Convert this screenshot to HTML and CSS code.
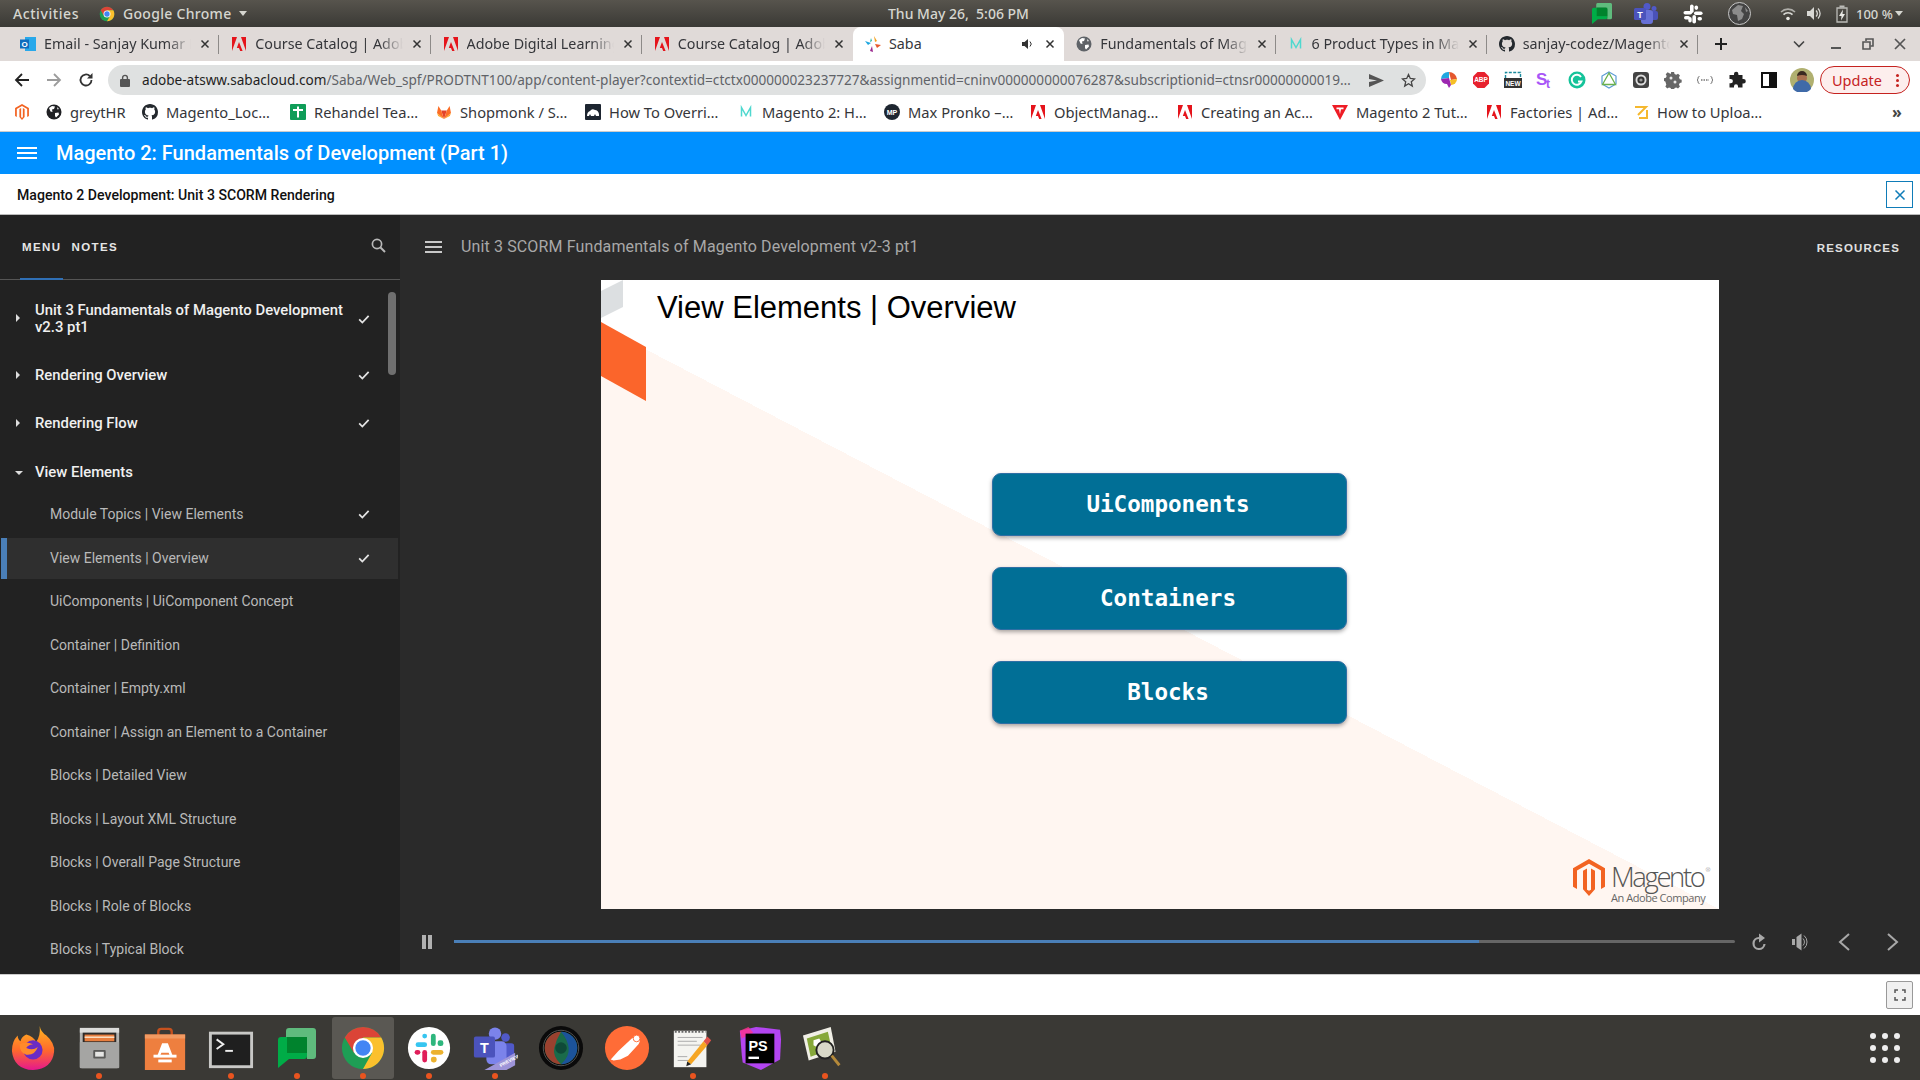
FILE: index.html
```html
<!DOCTYPE html>
<html>
<head>
	<title>Saba</title>
	<meta charset="utf-8">
	<link rel="stylesheet" href="styles.css">
</head>
<body>
	<svg class="defs" width="0" height="0">
		<symbol id="adobe" viewBox="0 0 16 16"><path fill="#e5141b" d="M1 1h5L1 15zM15 1h-5l5 14zM8 6l3.6 9H9.2L8 12H5.8z"/></symbol>
		<symbol id="github" viewBox="0 0 16 16"><path fill="#24292e" d="M8 0C3.58 0 0 3.58 0 8c0 3.54 2.29 6.53 5.47 7.59.4.07.55-.17.55-.38 0-.19-.01-.82-.01-1.49-2.01.37-2.53-.49-2.69-.94-.09-.23-.48-.94-.82-1.13-.28-.15-.68-.52-.01-.53.63-.01 1.08.58 1.23.82.72 1.21 1.87.87 2.33.66.07-.52.28-.87.51-1.07-1.78-.2-3.64-.89-3.64-3.95 0-.87.31-1.59.82-2.15-.08-.2-.36-1.02.08-2.12 0 0 .67-.21 2.2.82.64-.18 1.32-.27 2-.27.68 0 1.36.09 2 .27 1.53-1.04 2.2-.82 2.2-.82.44 1.1.16 1.92.08 2.12.51.56.82 1.27.82 2.15 0 3.07-1.87 3.75-3.65 3.95.29.25.54.73.54 1.48 0 1.07-.01 1.93-.01 2.2 0 .21.15.46.55.38A8.013 8.013 0 0016 8c0-4.42-3.58-8-8-8z"/></symbol>
		<symbol id="globe" viewBox="0 0 16 16"><circle cx="8" cy="8" r="7.5" fill="currentColor"/><path fill="#fff" d="M3 4l3-2 3 .5L8 5 6 5.5 6.5 8l-2-.5zM9 9l3.5-.5.5 2-3 3-1-1.5zM11 3l2 2-1.5.5z"/></symbol>
		<symbol id="mteal" viewBox="0 0 16 16"><path fill="none" stroke="#4fd8cf" stroke-width="1.5" d="M3.500 12.500V3.500l4.500 8 4.500-8v9"/></symbol>
		<symbol id="check" viewBox="0 0 16 16"><path fill="none" stroke="#e4e4e4" stroke-width="2" d="M2.5 8.5l3.6 3.6 7.2-7.6"/></symbol>
		<symbol id="tclose" viewBox="0 0 12 12"><path fill="none" stroke="#333" stroke-width="1.5" d="M2.5 2.5l7 7M9.5 2.5l-7 7"/></symbol>
		<symbol id="chatg" viewBox="0 0 38 40"><path fill="#5fbb7d" d="M11 0h24a3 3 0 0 1 3 3v25a3 3 0 0 1-3 3h-6V12a3 3 0 0 0-3-3H8V3a3 3 0 0 1 3-3z"/><path fill="#00ac47" d="M3 9h23a3 3 0 0 1 3 3v16a3 3 0 0 1-3 3H11l-11 9V12a3 3 0 0 1 3-3z"/><rect x="9" y="9" width="20" height="16" fill="#00832d"/></symbol>
	</svg>

	<div class="topbar">
		<span class="top-activities">Activities</span>
		<svg class="top-chrome" width="16" height="16" viewBox="0 0 48 48"><circle cx="24" cy="24" r="22" fill="#1e9e55"/><path fill="#db4437" d="M24 2A22 22 0 0 1 43.05 13H24L14.5 29 4.95 13A22 22 0 0 1 24 2z"/><path fill="#fbc02d" d="M43.05 13A22 22 0 0 1 24 46L33.5 29 24 13z"/><circle cx="24" cy="24" r="10.5" fill="#fff"/><circle cx="24" cy="24" r="8" fill="#4285f4"/></svg>
		<span class="top-app">Google Chrome</span>
		<span class="caret"></span>
		<span class="top-clock">Thu May 26,&nbsp; 5:06 PM</span>
		<div class="tray">
			<svg class="t-chat" width="20" height="23" viewBox="0 0 38 40"><use href="#chatg"/></svg>
			<svg class="t-teams" width="24" height="22" viewBox="0 0 24 22"><circle cx="13" cy="3.5" r="3.5" fill="#5059c9"/><circle cx="20" cy="5.5" r="2.5" fill="#5059c9"/><rect x="15" y="8" width="9" height="9" rx="2" fill="#4a52b8"/><rect x="7" y="7" width="12" height="14" rx="3" fill="#6770d6"/><rect x="0" y="5" width="12" height="12" rx="1.5" fill="#4b53bc"/><text x="6" y="14.5" class="t-teams-t">T</text></svg>
			<svg class="t-slack" width="20" height="20" viewBox="0 0 20 20"><g fill="#fff"><rect x="7" y="0.5" width="3.6" height="8.6" rx="1.8"/><rect x="0.5" y="7" width="8.6" height="3.6" rx="1.8"/><rect x="11" y="7.4" width="8.6" height="3.6" rx="1.8"/><rect x="9.4" y="11" width="3.6" height="8.6" rx="1.8"/><rect x="11.5" y="1.5" width="3.6" height="4.4" rx="1.8"/><rect x="1" y="12" width="6" height="3.4" rx="1.7"/><rect x="14.5" y="13" width="4.5" height="3.4" rx="1.7"/><rect x="5.3" y="13" width="3.4" height="5.5" rx="1.7"/></g></svg>
			<svg class="t-globe" width="23" height="23" viewBox="0 0 23 23"><circle cx="11.5" cy="11.5" r="11" fill="#444" stroke="#c8c8c8"/><path fill="#8c8c8c" d="M4 8l6-5 5 1-2 5 3 3-2 5-4 2-1-6-4-1zM17 5l3 4-2 1z"/></svg>
			<svg class="t-wifi" width="16" height="14" viewBox="0 0 16 14"><g fill="none" stroke="#d8d8d4" stroke-width="1.6"><path d="M1 5a10 10 0 0 1 14 0" opacity=".7"/><path d="M3.5 7.6a6.4 6.4 0 0 1 9 0"/></g><circle cx="8" cy="11.5" r="1.8" fill="#e8e8e4"/></svg>
			<svg class="t-sound" width="16" height="15" viewBox="0 0 16 15"><path fill="#d8d8d4" d="M0 5h3l4-4v13l-4-4H0z"/><g fill="none" stroke="#d8d8d4" stroke-width="1.3"><path d="M9 4.5a4 4 0 0 1 0 6"/><path d="M11 2.5a7 7 0 0 1 0 10"/></g></svg>
			<svg class="t-batt" width="12" height="18" viewBox="0 0 12 18"><path fill="none" stroke="#bcbcb8" stroke-width="1.3" d="M1 3h10v14H1z"/><rect x="3.5" y="0.5" width="5" height="2" fill="#bcbcb8"/><path fill="#e8e8e4" d="M7 4.5L3 11h2.5L5 15.5 9 9H6.5z"/></svg>
			<span class="t-pct">100 %</span>
			<span class="caret"></span>
		</div>
	</div>

	<div class="tabstrip">
		<div class="tab">
			<svg class="fav" viewBox="0 0 16 16"><rect x="5" y="1" width="11" height="14" fill="#28a8ea"/><rect x="0" y="3.5" width="9" height="9" fill="#0f6cbd"/><text x="4.5" y="10.8" class="fav-o">O</text></svg>
			<span class="tab-title">Email - Sanjay Kumar D</span>
			<svg class="tab-x"><use href="#tclose"/></svg>
		</div>
		<div class="tab">
			<svg class="fav"><use href="#adobe"/></svg>
			<span class="tab-title">Course Catalog | Adobe</span>
			<svg class="tab-x"><use href="#tclose"/></svg>
		</div>
		<div class="tab">
			<svg class="fav"><use href="#adobe"/></svg>
			<span class="tab-title">Adobe Digital Learning</span>
			<svg class="tab-x"><use href="#tclose"/></svg>
		</div>
		<div class="tab no-sep">
			<svg class="fav"><use href="#adobe"/></svg>
			<span class="tab-title">Course Catalog | Adobe</span>
			<svg class="tab-x"><use href="#tclose"/></svg>
		</div>
		<div class="tab active">
			<svg class="fav" viewBox="0 0 16 16"><path fill="#f4a11d" d="M9 0l1 6 2-1z"/><path fill="#e8582c" d="M10 8l6 1-4 3z"/><path fill="#9c2b8f" d="M7 10l1 6-3-1z"/><path fill="#1fa7e0" d="M0 5l6 2-3 2z"/><path fill="#1fb5a8" d="M5 6l2-1-1-3z"/></svg>
			<span class="tab-title">Saba</span>
			<svg class="tab-audio" width="12" height="12" viewBox="0 0 12 12"><path fill="#333" d="M0 4h2.5L6 1v10L2.5 8H0z"/><path fill="none" stroke="#333" d="M8 3.5a3.5 3.5 0 0 1 0 5"/></svg>
			<svg class="tab-x"><use href="#tclose"/></svg>
		</div>
		<div class="tab">
			<svg class="fav globe-ic"><use href="#globe"/></svg>
			<span class="tab-title">Fundamentals of Magento</span>
			<svg class="tab-x"><use href="#tclose"/></svg>
		</div>
		<div class="tab">
			<svg class="fav"><use href="#mteal"/></svg>
			<span class="tab-title">6 Product Types in Magento</span>
			<svg class="tab-x"><use href="#tclose"/></svg>
		</div>
		<div class="tab">
			<svg class="fav"><use href="#github"/></svg>
			<span class="tab-title">sanjay-codez/Magento</span>
			<svg class="tab-x"><use href="#tclose"/></svg>
		</div>
		<svg class="tab-new" width="14" height="14" viewBox="0 0 14 14"><path stroke="#222" stroke-width="2" d="M7 1v12M1 7h12"/></svg>
		<svg class="tab-down" width="12" height="8" viewBox="0 0 12 8"><path fill="none" stroke="#444" stroke-width="1.6" d="M1 1.5l5 5 5-5"/></svg>
		<div class="win-btns">
			<svg width="12" height="12" viewBox="0 0 12 12"><path stroke="#555" stroke-width="2" d="M1 10h10"/></svg>
			<svg width="12" height="12" viewBox="0 0 12 12"><g fill="none" stroke="#555" stroke-width="1.6"><path d="M4 3V1h7v7H8.5"/><path d="M1 4h7v7H1z"/></g></svg>
			<svg width="12" height="12" viewBox="0 0 12 12"><path stroke="#555" stroke-width="1.7" d="M1 1l10 10M11 1L1 11"/></svg>
		</div>
	</div>

	<div class="toolbar">
		<svg class="nav-ic" viewBox="0 0 16 16"><path fill="none" stroke="#222" stroke-width="1.8" d="M15 8H2M8 2L2 8l6 6"/></svg>
		<svg class="nav-ic" viewBox="0 0 16 16"><path fill="none" stroke="#9c9c9c" stroke-width="1.8" d="M1 8h13M8 2l6 6-6 6"/></svg>
		<svg class="nav-ic" viewBox="0 0 16 16"><path fill="none" stroke="#333" stroke-width="1.8" d="M13.5 8A5.5 5.5 0 1 1 11.8 4"/><path fill="#333" d="M14.5 1v5.5H9z"/></svg>
		<div class="omnibox">
			<svg class="lock" width="10" height="13" viewBox="0 0 10 13"><path fill="none" stroke="#555" stroke-width="1.4" d="M2.6 6V3.8a2.4 2.4 0 0 1 4.8 0V6"/><rect y="5" width="10" height="8" rx="1" fill="#555"/></svg>
			<span class="url"><b>adobe-atsww.sabacloud.com</b>/Saba/Web_spf/PRODTNT100/app/content-player?contextid=ctctx000000023237727&amp;assignmentid=cninv000000000076287&amp;subscriptionid=ctnsr00000000019…</span>
			<svg class="omni-ic" width="15" height="13" viewBox="0 0 15 13"><path fill="#555" d="M0 0l15 6.5L0 13V8l8-1.5L0 5z"/></svg>
			<svg class="omni-ic star" width="15" height="15" viewBox="0 0 15 15"><path fill="none" stroke="#444" stroke-width="1.3" d="M7.5 1.5l1.8 4 4.3.4-3.3 2.9 1 4.3-3.8-2.3-3.8 2.3 1-4.3L1.4 5.9l4.3-.4z"/></svg>
		</div>
		<div class="exts">
			<svg viewBox="0 0 18 18"><path fill="#e4572e" d="M9 1a8 8 0 0 1 8 7l-6 1z"/><path fill="#f6bf26" d="M10 9l7-1a6 6 0 0 1-6 6z"/><path fill="#1fa7e0" d="M1 8a7 7 0 0 1 8-7v6z"/><path fill="#9c27b0" d="M1 8l8-1 2 7-2 3-2-4a6 6 0 0 1-6-5z"/></svg>
			<svg viewBox="0 0 18 18"><path fill="#e7222e" d="M5.5 1h7L17 5.5v7L12.5 17h-7L1 12.5v-7z"/><text x="9" y="11.4" class="ext-abp">ABP</text></svg>
			<svg viewBox="0 0 18 18"><path fill="none" stroke="#1b8a9c" stroke-width="1.4" stroke-dasharray="3 1.4" d="M1.5 7V1.5h15V7"/><rect y="7" width="18" height="10" fill="#333"/><text x="9" y="15" class="ext-new">NEW</text></svg>
			<svg viewBox="0 0 18 18"><text x="0" y="14" class="ext-st">S</text><text x="10" y="17" class="ext-st small">t</text></svg>
			<svg viewBox="0 0 18 18"><circle cx="9" cy="9" r="8.5" fill="#15c39a"/><path fill="none" stroke="#fff" stroke-width="1.9" d="M13 6a5 5 0 1 0 .5 4.5H10"/></svg>
			<svg viewBox="0 0 18 18"><path fill="none" stroke="#5b9bd5" stroke-width="1.2" d="M9 1l7 4v8l-7 4-7-4V5z"/><path fill="none" stroke="#6ab04c" stroke-width="1.3" d="M9 2L2.5 13.5h13z"/></svg>
			<svg viewBox="0 0 18 18"><rect x="1" y="1" width="16" height="16" rx="3" fill="#444"/><circle cx="9" cy="9" r="5.5" fill="#ddd"/><circle cx="9" cy="9" r="3.6" fill="#333"/><circle cx="9" cy="9" r="1.6" fill="#999"/></svg>
			<svg viewBox="0 0 18 18"><path fill="#666" d="M7.500 1h3l.5 2 1.800.8 1.800-1 2 2-1 1.800.8 1.900 2 .5v3l-2 .5-.8 1.800 1 1.800-2 2-1.800-1-1.800.7-.5 2h-3l-.5-2-1.800-.7-1.800 1-2-2 1-1.800L1.400 11 0 10.500v-3l2-.5.8-1.900-1-1.800 2-2 1.800 1L7 3z" transform="scale(.96)"/><circle cx="7" cy="7" r="1.5" fill="#e8e8e8"/><circle cx="11" cy="11" r="1.500" fill="#e8e8e8"/></svg>
			<svg viewBox="0 0 18 18"><path fill="none" stroke="#777" stroke-width="1" d="M3.500 5.500Q2 5.500 2 7v1.200L1 9l1 .8V11q0 1.500 1.500 1.500M14.500 5.500Q16 5.500 16 7v1.200l1 .8-1 .8V11q0 1.500-1.500 1.500"/><path stroke="#777" stroke-width="1.500" stroke-dasharray="1.500 1" d="M5 9h8"/></svg>
			<svg viewBox="0 0 18 18"><path fill="#222" d="M6 3a2.200 2.200 0 0 1 4.400 0V4h4.100v4h1a2.300 2.300 0 0 1 0 4.600h-1V16.500H10v-1.300a2 2 0 0 0-4 0v1.300H1.500v-4.200h1.200a2.200 2.200 0 0 0 0-4.400H1.500V4H6z"/></svg>
			<svg viewBox="0 0 18 18"><rect x="2" y="2" width="14" height="14" fill="none" stroke="#111" stroke-width="2"/><rect x="9" y="2" width="7" height="14" fill="#111"/></svg>
			<svg class="avatar" viewBox="0 0 24 24"><circle cx="12" cy="12" r="12" fill="#b0b070"/><circle cx="12" cy="10" r="5" fill="#a8714f"/><path fill="#3a2a20" d="M7 8a5 5 0 0 1 10 0q-5-2-10 0z"/><path fill="#3f6aa8" d="M3 21a9 9 0 0 1 18 0 12 12 0 0 1-18 0z"/></svg>
		</div>
		<div class="update">
			<span>Update</span>
			<span class="update-dots"></span>
		</div>
	</div>

	<div class="bookmarks">
		<span class="bm"><svg width="16" height="18" viewBox="0 0 32 37"><path fill="#f26322" d="M16 0l16 9.200V27.800l-4 2.300V11.600L16 4.700 4 11.600V30.100l-4-2.300V9.200z"/><path fill="#f26322" d="M18 9.400l4 2.300v18.600L16 37l-6-6.700V11.700l4-2.300v21.300l2 1.100 2-1.100z"/></svg></span>
		<span class="bm"><svg class="globe-dk"><use href="#globe"/></svg>greytHR</span>
		<span class="bm"><svg><use href="#github"/></svg>Magento_Loc…</span>
		<span class="bm"><svg viewBox="0 0 16 16"><rect width="16" height="16" rx="1" fill="#0f9d58"/><path stroke="#fff" stroke-width="2" d="M8 2.500v11M3 6h10"/></svg>Rehandel Tea…</span>
		<span class="bm"><svg viewBox="0 0 16 16"><path fill="#e24329" d="M8 15L5.200 6.500h5.600z"/><path fill="#fc6d26" d="M8 15L1 9l1.400-7 2.800 4.500zM8 15l7-6-1.400-7-2.800 4.500z"/><path fill="#fca326" d="M1 9l7 6-5.800-3zM15 9l-7 6 5.800-3z"/></svg>Shopmonk / S…</span>
		<span class="bm"><svg viewBox="0 0 16 16"><rect width="16" height="16" rx="1" fill="#1d2530"/><path fill="#fff" d="M2 12q0-4 3-5 2-3 5-1 3 0 4 4v2h-3l-1-2-1 2H6l-1-2-1 2z"/></svg>How To Overri…</span>
		<span class="bm"><svg><use href="#mteal"/></svg>Magento 2: H…</span>
		<span class="bm"><svg viewBox="0 0 16 16"><circle cx="8" cy="8" r="8" fill="#1e2630"/><text x="8" y="11" class="bm-mp">MP</text></svg>Max Pronko –…</span>
		<span class="bm"><svg><use href="#adobe"/></svg>ObjectManag…</span>
		<span class="bm"><svg><use href="#adobe"/></svg>Creating an Ac…</span>
		<span class="bm"><svg viewBox="0 0 16 16"><path fill="#ee1c25" d="M0 1h16l-8 15z"/><path fill="#fff" d="M4.500 3.500h7v1.800H9l-1 5-1-5H4.500z"/></svg>Magento 2 Tut…</span>
		<span class="bm"><svg><use href="#adobe"/></svg>Factories | Ad…</span>
		<span class="bm"><svg viewBox="0 0 16 16"><path fill="none" stroke="#f5b82e" stroke-width="2" d="M2 3h11l-8 8M14 6v8H6"/></svg>How to Uploa…</span>
		<span class="bm-more">»</span>
	</div>

	<div class="course-bar">
		<span class="burger"><i></i><i></i><i></i></span>
		<span class="course-title">Magento 2: Fundamentals of Development (Part 1)</span>
	</div>
	<div class="sub-bar">
		<span class="sub-title">Magento 2 Development: Unit 3 SCORM Rendering</span>
		<span class="sub-close"><svg width="12" height="12" viewBox="0 0 12 12"><path stroke="#0f7cb8" stroke-width="1.500" d="M1.500 1.500l9 9M10.500 1.500l-9 9"/></svg></span>
	</div>

	<div class="player">
		<div class="side">
			<div class="side-head">
				<span class="side-tab on">MENU</span>
				<span class="side-tab">NOTES</span>
				<svg class="side-search" width="15" height="15" viewBox="0 0 15 15"><circle cx="6" cy="6" r="4.600" fill="none" stroke="#b8b8b8" stroke-width="1.700"/><path stroke="#b8b8b8" stroke-width="2" d="M9.500 9.500l4.500 4.500"/></svg>
			</div>
			<div class="scroll-thumb"></div>
			<ul class="toc">
				<li class="sec first"><i class="arrow"></i><span>Unit 3 Fundamentals of Magento Development v2.3 pt1</span><svg class="tick"><use href="#check"/></svg></li>
				<li class="sec"><i class="arrow"></i><span>Rendering Overview</span><svg class="tick"><use href="#check"/></svg></li>
				<li class="sec"><i class="arrow"></i><span>Rendering Flow</span><svg class="tick"><use href="#check"/></svg></li>
				<li class="sec open"><i class="arrow"></i><span>View Elements</span></li>
				<li class="topic"><span>Module Topics | View Elements</span><svg class="tick"><use href="#check"/></svg></li>
				<li class="topic active"><span>View Elements | Overview</span><svg class="tick"><use href="#check"/></svg></li>
				<li class="topic"><span>UiComponents | UiComponent Concept</span></li>
				<li class="topic"><span>Container | Definition</span></li>
				<li class="topic"><span>Container | Empty.xml</span></li>
				<li class="topic"><span>Container | Assign an Element to a Container</span></li>
				<li class="topic"><span>Blocks | Detailed View</span></li>
				<li class="topic"><span>Blocks | Layout XML Structure</span></li>
				<li class="topic"><span>Blocks | Overall Page Structure</span></li>
				<li class="topic"><span>Blocks | Role of Blocks</span></li>
				<li class="topic"><span>Blocks | Typical Block</span></li>
			</ul>
		</div>

		<div class="stage">
			<div class="stage-head">
				<span class="burger small"><i></i><i></i><i></i></span>
				<span class="stage-title">Unit 3 SCORM Fundamentals of Magento Development v2-3 pt1</span>
				<span class="stage-res">RESOURCES</span>
			</div>
			<div class="slide">
				<svg class="slide-shapes" width="46" height="122" viewBox="0 0 46 122"><path fill="#dcdfe1" d="M0 11L22 0v27L0 38z"/><path fill="#fb652b" d="M0 42l45 25v54L0 96z"/></svg>
				<h1 class="slide-title">View Elements | Overview</h1>
				<div class="slide-btns">
					<div class="slide-btn">UiComponents</div>
					<div class="slide-btn">Containers</div>
					<div class="slide-btn">Blocks</div>
				</div>
				<div class="slide-logo">
					<svg width="32" height="37" viewBox="0 0 32 37"><path fill="#f26322" d="M16 0l16 9.200V27.800l-4 2.300V11.600L16 4.700 4 11.600V30.100l-4-2.300V9.200z"/><path fill="#f26322" d="M18 9.400l4 2.300v18.600L16 37l-6-6.700V11.700l4-2.300v21.300l2 1.100 2-1.100z"/></svg>
					<div class="logo-text">
						<span class="logo-name">Magento<sup>®</sup></span>
						<span class="logo-sub">An Adobe Company</span>
					</div>
				</div>
			</div>
			<div class="controls">
				<span class="pause"><i></i><i></i></span>
				<div class="progress"><div class="progress-fill"></div></div>
				<svg class="ctl c-reload" viewBox="0 0 24 24"><path fill="none" stroke="#a8a8a8" stroke-width="2.200" d="M17.500 14a5.500 5.500 0 1 1-5.500-6"/><path fill="#a8a8a8" d="M12 3.500l6 4.500-6 4.500z"/></svg>
				<svg class="ctl c-sound" viewBox="0 0 24 24"><path fill="#a8a8a8" d="M4 9h3v6H4zM8.500 7l5-3.500v17l-5-3.500z"/><g fill="none" stroke="#a8a8a8"><path d="M15 8.500a5 5 0 0 1 0 7"/><path d="M16 5.500a8.500 8.500 0 0 1 0 13"/></g></svg>
				<svg class="ctl c-prev" viewBox="0 0 24 24"><path fill="none" stroke="#a8a8a8" stroke-width="2" d="M16 4l-9 8 9 8"/></svg>
				<svg class="ctl c-next" viewBox="0 0 24 24"><path fill="none" stroke="#a8a8a8" stroke-width="2" d="M8 4l9 8-9 8"/></svg>
			</div>
		</div>
	</div>

	<div class="foot-bar">
		<span class="full-btn"><svg width="12" height="12" viewBox="0 0 12 12"><path fill="none" stroke="#555" stroke-width="1.500" d="M1 4V1h3M8 1h3v3M11 8v3H8M4 11H1V8"/></svg></span>
	</div>

	<div class="dock">
		<div class="dock-app">
			<svg viewBox="0 0 48 48"><defs><linearGradient id="ff" x1="0" y1="0" x2="0" y2="1"><stop offset="0" stop-color="#ffb81f"/><stop offset=".55" stop-color="#ff6a2b"/><stop offset="1" stop-color="#e5178e"/></linearGradient></defs><path fill="url(#ff)" d="M31 1q1 6 7 10 9 8 8 17-2 18-22 19Q4 46 2 27 2 17 8 11q0 4 3 6 1-5 6-7 8 2 10 8 5-6 4-17z"/><circle cx="24" cy="26" r="10" fill="#6a2bc4"/><path fill="#ff8a2b" d="M10 20q6-3 14 0-6 1-7 4 7 3 12-1-3 9-12 8-7-2-7-11z"/></svg>
		</div>
		<div class="dock-app run">
			<svg viewBox="0 0 48 48"><rect x="4" y="3" width="41" height="42" rx="2" fill="#b3b3b1"/><rect x="4" y="3" width="41" height="5" fill="#dcdcda"/><rect x="7" y="8" width="35" height="10" fill="#2d2a28"/><rect x="9" y="10" width="31" height="7" fill="#e87e3e"/><rect x="9" y="12" width="31" height="1.500" fill="#fbe3c9"/><rect x="4" y="18" width="41" height="27" fill="#a5a5a3"/><rect x="18" y="26" width="13" height="9" rx="1" fill="#5a5a58"/><rect x="20" y="28" width="9" height="5" fill="#e5e5e3"/></svg>
		</div>
		<div class="dock-app">
			<svg viewBox="0 0 48 48"><path fill="none" stroke="#c6511e" stroke-width="2.500" d="M17 14V7q0-3 3-3h8q3 0 3 3v7"/><path fill="#ee7f3f" d="M3 10h42v37H3z"/><path fill="#f29a62" d="M3 10h42v4H3z"/><path fill="#fff" d="M21 19h6l5 13h-3l-1.200-3h-7.600L19 32h-3z"/><rect x="12" y="31" width="24" height="3" fill="#fff"/><rect x="17" y="36" width="14" height="3" fill="#fff"/></svg>
		</div>
		<div class="dock-app run">
			<svg viewBox="0 0 48 48"><rect x="1" y="7" width="46" height="38" fill="#c8c8c6"/><rect x="4" y="10" width="40" height="32" fill="#1f1f1f"/><path fill="none" stroke="#eee" stroke-width="2" d="M9 15l7 5-7 5"/><path stroke="#eee" stroke-width="2" d="M18 27h8"/></svg>
		</div>
		<div class="dock-app run">
			<svg class="dock-chat" viewBox="0 0 38 40"><use href="#chatg"/></svg>
		</div>
		<div class="dock-app run current">
			<svg viewBox="0 0 48 48"><circle cx="24" cy="24" r="22" fill="#1e9e55"/><path fill="#db4437" d="M24 2A22 22 0 0 1 43.050 13H24L14.500 29 4.950 13A22 22 0 0 1 24 2z"/><path fill="#fbc02d" d="M43.050 13A22 22 0 0 1 24 46L33.500 29 24 13z"/><circle cx="24" cy="24" r="10.500" fill="#fff"/><circle cx="24" cy="24" r="8" fill="#4285f4"/></svg>
		</div>
		<div class="dock-app run">
			<svg viewBox="0 0 48 48"><circle cx="24" cy="24" r="22" fill="#fff"/><g><rect x="10" y="18" width="12" height="5" rx="2.500" fill="#36c5f0"/><rect x="26" y="9" width="5" height="13" rx="2.500" fill="#2eb67d"/><rect x="33" y="16" width="6" height="6" rx="2.500" fill="#2eb67d"/><rect x="26" y="26" width="13" height="5" rx="2.500" fill="#ecb22e"/><rect x="26" y="33" width="6" height="6" rx="2.500" fill="#ecb22e"/><rect x="17" y="26" width="5" height="13" rx="2.500" fill="#e01e5a"/><rect x="9" y="26" width="6" height="5" rx="2.500" fill="#e01e5a"/><rect x="17" y="9" width="5" height="5" rx="2.500" fill="#36c5f0"/></g></svg>
		</div>
		<div class="dock-app run">
			<svg viewBox="0 0 48 48"><circle cx="24" cy="9" r="6.500" fill="#7b83eb"/><circle cx="35" cy="13" r="4.500" fill="#5059c9"/><rect x="30" y="19" width="14" height="17" rx="3" fill="#5059c9"/><rect x="15" y="17" width="21" height="24" rx="5" fill="#7b83eb"/><rect x="2" y="12" width="22" height="22" rx="2" fill="#4b53bc"/><text x="13" y="29" class="dock-t">T</text><path fill="#9d94d8" d="M13 47l32-18v13l-9 5z"/><text x="30" y="44" class="dock-prev" transform="rotate(-28 30 44)">PREVIEW</text></svg>
		</div>
		<div class="dock-app">
			<svg viewBox="0 0 48 48"><circle cx="24" cy="24" r="23" fill="#0a0a0a"/><circle cx="24" cy="24" r="18.500" fill="none" stroke="#555" stroke-width="1"/><circle cx="24" cy="24" r="17" fill="#1a6b4a"/><path fill="#b23a2a" d="M24 7a17 17 0 0 0 0 34q-9-8-7-17t7-17z" opacity=".85"/><path fill="#1d4fa8" d="M24 7a17 17 0 0 1 0 34q9-8 8-17t-8-17z" opacity=".85"/><circle cx="24" cy="24" r="6" fill="#0f4a38"/></svg>
		</div>
		<div class="dock-app">
			<svg viewBox="0 0 48 48"><circle cx="24" cy="24" r="23" fill="#ff6c37"/><path fill="#fff" d="M7 36l8-9 12-11q5-5 9-4 3 3 0 8l-11 12-8 4-7 1z"/><circle cx="34" cy="14" r="3.500" fill="#fff" stroke="#ff6c37"/></svg>
		</div>
		<div class="dock-app run">
			<svg viewBox="0 0 48 48"><rect x="4" y="6" width="34" height="38" fill="#f4f4f0"/><path stroke="#666" stroke-width="2" stroke-dasharray="2 1.500" d="M5 7h32"/><path stroke="#aaa" d="M8 13h26M8 17h20M8 21h24M8 33h10M8 37h16"/><path fill="#f6a623" d="M18 38l17-21 4 4-17 20z"/><path fill="#e0524b" d="M35 17l4-5 4 4-4 5z"/><path fill="#222" d="M18 38l-1 5 5-2z"/></svg>
		</div>
		<div class="dock-app">
			<svg viewBox="0 0 48 48"><path fill="#b345f1" d="M4 6l17-4 25 3 1 10-1 21-20 11-19-8-1-8z"/><path fill="#ff318c" d="M4 6l9-4 5 6-12 6z" opacity=".8"/><rect x="10" y="9" width="30" height="31" fill="#000"/><text x="13" y="27" class="dock-ps">PS</text><rect x="13" y="33" width="11" height="2.500" fill="#fff"/></svg>
		</div>
		<div class="dock-app run">
			<svg viewBox="0 0 48 48"><path fill="#f0efe6" d="M1 11l29-9 5 26-28 9z"/><path fill="#86a83a" d="M5 14l22-7 4 18-22 8z"/><path fill="#fff" d="M12 16l6-2 3 5-4 5-5-3z"/><circle cx="24" cy="26" r="9" fill="#d8d8c8" stroke="#222" stroke-width="2"/><path stroke="#b58a3a" stroke-width="3" d="M31 32l8 10"/></svg>
		</div>
		<div class="dock-grid"><i></i><i></i><i></i><i></i><i></i><i></i><i></i><i></i><i></i></div>
	</div>
</body>
</html>
```

FILE: styles.css
```css
html, body{
	margin: 0;
	padding: 0;
	height: 1080px;
	overflow: hidden;
}
body{
	font-family: "Noto Sans", sans-serif;
	background: #fff;
}
.defs{
	position: absolute;
}
svg{
	flex: none;
}

/* ubuntu top bar */
.topbar{
	height: 27px;
	display: flex;
	align-items: center;
	background: linear-gradient(#57544d, #3a3935);
	color: #d6d6d0;
	font-size: 14px;
	font-weight: 500;
	padding-left: 13px;
	position: relative;
}
.top-activities{
	width: 86px;
	letter-spacing: .57px;
	white-space: nowrap;
}
.top-chrome{
	margin-right: 8px;
}
.top-app{
	width: 116px;
	letter-spacing: .3px;
	white-space: nowrap;
}
.caret{
	width: 0;
	height: 0;
	border-left: 4.5px solid transparent;
	border-right: 4.5px solid transparent;
	border-top: 5px solid #d6d6d0;
}
.top-clock{
	position: absolute;
	left: 888px;
}
.tray{
	margin-left: auto;
	display: flex;
	align-items: center;
	padding-right: 17px;
}
.t-chat{ margin-right: 22px; }
.t-teams{ margin-right: 25px; }
.t-slack{ margin-right: 25px; }
.t-globe{ margin-right: 29px; }
.t-wifi{ margin-right: 11px; }
.t-sound{ margin-right: 13px; }
.t-batt{ margin-right: 8px; }
.t-pct{
	width: 39px;
	font-size: 13px;
}
.t-teams-t{
	font: 700 9px "Liberation Sans", sans-serif;
	fill: #fff;
	text-anchor: middle;
}

/* tabs */
.tabstrip{
	height: 34px;
	display: flex;
	align-items: center;
	background: #e0dad8;
	padding-left: 8px;
	position: relative;
}
.tab{
	width: 211.25px;
	height: 34px;
	box-sizing: border-box;
	display: flex;
	align-items: center;
	padding: 0 8px 0 12px;
	position: relative;
	font-size: 14.3px;
	color: #35363a;
}
.tab::after{
	content: "";
	position: absolute;
	right: 0;
	top: 8px;
	height: 19px;
	width: 1px;
	background: #8d8a88;
}
.tab.no-sep::after,
.tab.active::after{
	display: none;
}
.tab.active{
	background: #fff;
	border-radius: 8px 8px 0 0;
}
.fav{
	width: 16px;
	height: 16px;
	margin-right: 8px;
}
.fav-o{
	font: 700 8px "Liberation Sans", sans-serif;
	fill: #fff;
	text-anchor: middle;
}
.globe-ic{
	color: #5f6368;
}
.tab-title{
	flex: 1;
	white-space: nowrap;
	overflow: hidden;
	margin-top: -2px;
	-webkit-mask-image: linear-gradient(to right, #000 84%, transparent);
	mask-image: linear-gradient(to right, #000 84%, transparent);
}
.tab.active .tab-title{
	-webkit-mask-image: none;
	mask-image: none;
}
.tab-audio{
	margin-right: 2px;
}
.tab-x{
	width: 12px;
	height: 12px;
	margin-left: 8px;
}
.tab-new{
	margin-left: 16px;
}
.tab-down{
	margin-left: 65px;
}
.win-btns{
	margin-left: auto;
	display: flex;
	gap: 20px;
	padding-right: 14px;
}

/* toolbar */
.toolbar{
	height: 36px;
	box-sizing: border-box;
	display: flex;
	align-items: center;
	background: #fff;
	padding: 2px 0 0 14px;
}
.nav-ic{
	width: 16px;
	height: 16px;
	margin-right: 16px;
}
.omnibox{
	width: 1318px;
	height: 30px;
	margin-left: -2px;
	box-sizing: border-box;
	background: #dfe1e1;
	border-radius: 15px;
	display: flex;
	align-items: center;
	padding-left: 12px;
}
.lock{
	margin-right: 12px;
}
.url{
	width: 1216px;
	flex: none;
	margin-top: -2px;
	white-space: nowrap;
	overflow: hidden;
	color: #5f6368;
	font-size: 13.6px;
}
.url b{
	font-weight: 400;
	color: #1f1f1f;
}
.omni-ic{
	margin-left: 11px;
}
.omni-ic.star{
	margin-left: 17px;
}
.exts{
	display: flex;
	align-items: center;
	margin-left: 14px;
	gap: 14px;
}
.exts svg{
	width: 18px;
	height: 18px;
}
.exts svg.avatar{
	width: 24px;
	height: 24px;
	margin-left: -2px;
}
.ext-abp{
	font: 700 6.5px "Liberation Sans", sans-serif;
	fill: #fff;
	text-anchor: middle;
}
.ext-new{
	font: 700 6.5px "Liberation Sans", sans-serif;
	fill: #fff;
	text-anchor: middle;
}
.ext-st{
	font: 700 17px "Liberation Sans", sans-serif;
	fill: #a855f7;
}
.ext-st.small{
	font-size: 12px;
}
.update{
	width: 90px;
	height: 28px;
	box-sizing: border-box;
	margin-left: 6px;
	border: 1px solid #c5221f;
	border-radius: 14px;
	background: #fdeeed;
	color: #c5221f;
	font-size: 14.5px;
	display: flex;
	align-items: center;
	justify-content: space-between;
	padding: 0 10px 0 11px;
}
.update-dots{
	width: 3px;
	height: 3px;
	border-radius: 50%;
	background: #c5221f;
	box-shadow: 0 -5px 0 #c5221f, 0 5px 0 #c5221f;
}

/* bookmarks bar */
.bookmarks{
	height: 35px;
	box-sizing: border-box;
	border-bottom: 1px solid #ccc;
	padding-bottom: 4px;
	display: grid;
	grid-template-columns: 32px 96px 148px 146px 149px 153px 146px 146px 147px 155px 154px 147px 1fr 23px;
	align-items: center;
	padding-left: 14px;
	background: #fff;
	font-size: 14.7px;
	color: #35363a;
}
.bm{
	display: flex;
	align-items: center;
	white-space: nowrap;
	overflow: hidden;
}
.bm svg{
	width: 16px;
	height: 16px;
	margin-right: 8px;
}
.globe-dk{
	color: #202124;
}
.bm-mp{
	font: 700 7px "Liberation Sans", sans-serif;
	fill: #fff;
	text-anchor: middle;
}
.bm-more{
	grid-column: 14;
	font-size: 16px;
	font-weight: 700;
	color: #444;
	margin-left: -5px;
}

/* course header */
.course-bar{
	height: 42px;
	display: flex;
	align-items: center;
	background: #0090ff;
	padding-left: 17px;
}
.burger{
	width: 20px;
	display: flex;
	flex-direction: column;
	gap: 3px;
	margin-right: 19px;
}
.burger i{
	height: 2px;
	background: #fff;
}
.course-title{
	font: 500 20px Roboto, sans-serif;
	color: #fff;
}
.sub-bar{
	height: 41px;
	box-sizing: border-box;
	display: flex;
	align-items: center;
	background: #fff;
	border-bottom: 1px solid #bbb;
	padding: 1px 7px 0 17px;
}
.sub-title{
	font: 500 14.1px Roboto, sans-serif;
	color: #111;
}
.sub-close{
	margin-left: auto;
	width: 27px;
	height: 27px;
	box-sizing: border-box;
	border: 1px solid #0f7cb8;
	display: flex;
	align-items: center;
	justify-content: center;
}

/* player */
.player{
	height: 759px;
	display: flex;
	background: #2a2a2a;
	overflow: hidden;
}
.side{
	width: 400px;
	flex: none;
	background: #222;
	position: relative;
}
.side-head{
	height: 65px;
	box-sizing: border-box;
	border-bottom: 1px solid #555;
	display: flex;
	align-items: center;
	gap: 10px;
	padding: 0 14px 0 22px;
	font: 700 11.5px "Liberation Sans", sans-serif;
	letter-spacing: 1.4px;
	color: #e6e6e6;
	position: relative;
}
.side-tab.on::after{
	content: "";
	position: absolute;
	left: 20px;
	bottom: -1px;
	width: 43px;
	height: 2px;
	background: #2f6fb5;
}
.side-search{
	margin-left: auto;
	margin-top: -3px;
}
.scroll-thumb{
	position: absolute;
	left: 388px;
	top: 77px;
	width: 8px;
	height: 83px;
	border-radius: 4px;
	background: #6f6f6f;
}
.toc{
	list-style-type: none;
	margin: 0;
	padding: 5px 0 0 0;
}
.toc li{
	display: flex;
	align-items: center;
	font-family: Roboto, sans-serif;
	font-size: 14px;
	box-sizing: border-box;
}
.toc .sec{
	height: 48px;
	padding: 0 29px 0 35px;
	font-size: 14.85px;
	font-weight: 500;
	color: #f0f0f0;
	position: relative;
}
.toc .sec.first{
	height: 66px;
	padding-top: 1px;
	line-height: 17px;
}
.toc .sec.open{
	height: 45.5px;
	padding-top: 4px;
}
.sec span{
	width: 322px;
}
.arrow{
	position: absolute;
	left: 16px;
	top: 50%;
	margin-top: -4px;
	border-top: 4px solid transparent;
	border-bottom: 4px solid transparent;
	border-left: 4px solid #ddd;
}
.sec.open .arrow{
	left: 15px;
	margin-top: 1px;
	border-left: 4px solid transparent;
	border-right: 4px solid transparent;
	border-top: 4px solid #ddd;
	border-bottom: 0;
}
.tick{
	width: 14px;
	height: 14px;
	margin-left: auto;
}
.topic{
	height: 43.5px;
	padding: 0 29px 0 50px;
	color: #b9b9b9;
}
.topic.active{
	height: 41px;
	margin-top: 2px;
	margin-bottom: .5px;
	margin-left: 1px;
	margin-right: 2px;
	padding: 0 27px 2px 43px;
	background: #2f2f2f;
	border-left: 6px solid #4a7fb8;
}
.stage{
	flex: 1;
	display: flex;
	flex-direction: column;
}
.stage-head{
	height: 65px;
	display: flex;
	align-items: center;
	padding: 0 20px 0 25px;
}
.burger.small{
	width: 17px;
	margin-right: 19px;
	margin-top: -2px;
	gap: 3px;
}
.burger.small i{
	background: #c8c8c8;
}
.stage-title{
	font: 400 16px Roboto, sans-serif;
	letter-spacing: .13px;
	color: #a8a8a8;
	margin-top: -2px;
}
.stage-res{
	margin-left: auto;
	font: 700 11.5px "Liberation Sans", sans-serif;
	letter-spacing: 1.15px;
	color: #e0e0e0;
}

/* the slide */
.slide{
	width: 1118px;
	height: 629px;
	margin-left: 201px;
	position: relative;
	background: linear-gradient(to top right, #fff6f1 50%, #fff 50%) bottom no-repeat;
	background-size: 100% 583px;
	background-color: #fff;
}
.slide-shapes{
	position: absolute;
	left: 0;
	top: 0;
}
.slide-title{
	margin: 0;
	padding: 8px 0 0 56px;
	height: 54px;
	box-sizing: border-box;
	font: 400 31px "Liberation Sans", sans-serif;
	line-height: 40px;
	color: #000;
}
.slide-btns{
	width: 355px;
	margin: 139px 0 0 391px;
	display: flex;
	flex-direction: column;
	gap: 31px;
}
.slide-btn{
	height: 63px;
	display: flex;
	align-items: center;
	justify-content: center;
	padding: 0 3px 2px 0;
	background: #016f96;
	border: 1px solid #2f6fa5;
	box-sizing: border-box;
	border-radius: 9px;
	box-shadow: 0 2px 4px rgba(0,0,0,.35);
	font: 700 22.6px "DejaVu Sans Mono", monospace;
	color: #fff;
}
.slide-logo{
	position: absolute;
	left: 972px;
	top: 579px;
	display: flex;
	gap: 6px;
}
.logo-text{
	display: flex;
	flex-direction: column;
}
.logo-name{
	font: 300 27.5px/28px "Open Sans", sans-serif;
	letter-spacing: -2.4px;
	color: #555;
	height: 28px;
	padding-top: 4px;
	white-space: nowrap;
}
.logo-name sup{
	font-size: 6px;
	vertical-align: 15px;
	line-height: 0;
	letter-spacing: 0;
	margin-left: 2px;
}
.logo-sub{
	font: 400 11px/13px "Open Sans", sans-serif;
	letter-spacing: -.45px;
	color: #666;
	white-space: nowrap;
}
.controls{
	height: 65px;
	display: flex;
	align-items: center;
	padding: 0 16px 0 22px;
}
.pause{
	width: 10px;
	height: 14px;
	display: flex;
	justify-content: space-between;
}
.pause i{
	width: 4px;
	background: #b0b0b0;
}
.progress{
	flex: 1;
	height: 3px;
	margin-left: 22px;
	background: #666;
	border-radius: 2px;
}
.progress-fill{
	width: 80%;
	height: 3px;
	background: #4a7fb8;
}
.ctl{
	width: 24px;
	height: 24px;
}
.c-reload{ margin-left: 12px; }
.c-sound{ margin-left: 17px; }
.c-prev{ margin-left: 21px; }
.c-next{ margin-left: 23px; }

/* white strip under the player */
.foot-bar{
	height: 41px;
	box-sizing: border-box;
	border-top: 1px solid #ccc;
	display: flex;
	align-items: center;
	justify-content: flex-end;
	padding-right: 7px;
	background: #fff;
}
.full-btn{
	width: 27px;
	height: 28px;
	box-sizing: border-box;
	background: #f0f0f0;
	border: 1px solid #999;
	border-radius: 2px;
	display: flex;
	align-items: center;
	justify-content: center;
}

/* dock */
.dock{
	height: 65px;
	box-sizing: border-box;
	display: flex;
	align-items: center;
	gap: 4px;
	padding: 0 0 0 2px;
	background: #3a3935;
}
.dock-app{
	width: 62px;
	height: 62px;
	margin-top: 1px;
	display: flex;
	align-items: center;
	justify-content: center;
	border-radius: 3px;
	position: relative;
}
.dock-app svg{
	width: 46px;
	height: 46px;
}
.dock-app svg.dock-chat{
	width: 38px;
	height: 40px;
}
.dock-app.current{
	background: #5a5853;
}
.dock-app.run::after{
	content: "";
	position: absolute;
	left: 28px;
	bottom: 0;
	width: 6px;
	height: 6px;
	border-radius: 50%;
	background: #e9541f;
}
.dock-t{
	font: 700 15px "Liberation Sans", sans-serif;
	fill: #fff;
	text-anchor: middle;
}
.dock-prev{
	font: 700 5px "Liberation Sans", sans-serif;
	fill: #fff;
}
.dock-ps{
	font: 700 15px "Liberation Sans", sans-serif;
	fill: #fff;
}
.dock-grid{
	margin-left: auto;
	margin-right: 20px;
	display: grid;
	grid-template-columns: repeat(3, 6px);
	gap: 6px;
}
.dock-grid i{
	width: 6px;
	height: 6px;
	border-radius: 50%;
	background: #eee;
}
```
